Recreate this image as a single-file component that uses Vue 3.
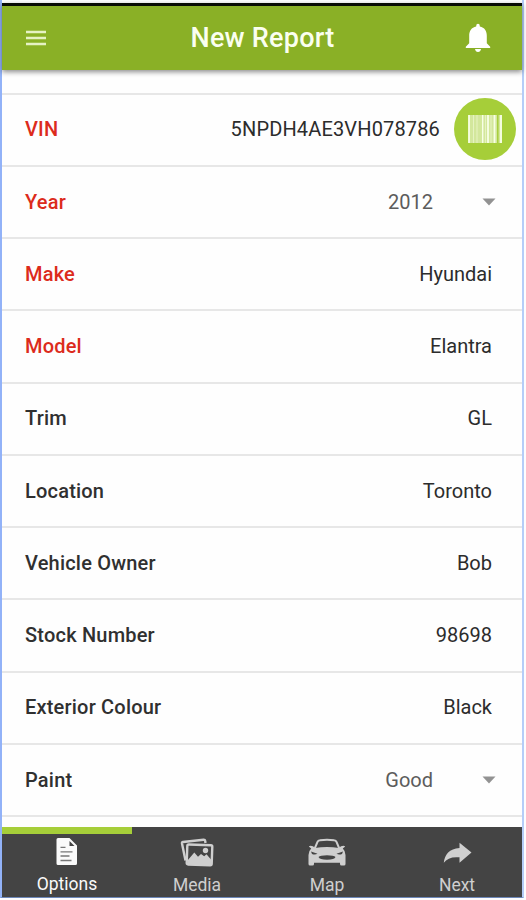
<script setup>
import {computed, ref} from "vue";

const fields = ref([
  { label: 'VIN', value: '5NPDH4AE3VH078786', required: true, type: 'scan' },
  { label: 'Year', value: '2012', required: true, type: 'select' },
  { label: 'Make', value: 'Hyundai', required: true },
  { label: 'Model', value: 'Elantra', required: true },
  { label: 'Trim', value: 'GL' },
  { label: 'Location', value: 'Toronto' },
  { label: 'Vehicle Owner', value: 'Bob' },
  { label: 'Stock Number', value: '98698' },
  { label: 'Exterior Colour', value: 'Black' },
  { label: 'Paint', value: 'Good', type: 'select' },
]);

const tabs = ['Options', 'Media', 'Map', 'Next'];
const activeTab = ref('Options');

const indicatorStyle = computed(() => ({
  width: 100 / tabs.length + '%',
  marginLeft: tabs.indexOf(activeTab.value) * 100 / tabs.length + '%',
}));
</script>

<template>
  <div class="report">
    <header class="report__header">
      <button class="report__header-button" aria-label="Menu">
        <svg width="22" height="16" viewBox="0 0 22 16">
          <path d="M1 2h20M1 8h20M1 14h20" stroke="#e6f2c4" stroke-width="2.4" />
        </svg>
      </button>
      <h1 class="report__title">New Report</h1>
      <button class="report__header-button" aria-label="Notifications">
        <svg width="26" height="30" viewBox="0 0 26 30" fill="#ffffff">
          <path d="M11.2 2.9Q11.2.8 13 .8t1.8 2.1v.7C19.600 4.500 21.800 8.200 21.800 12.800V20.200L25.200 23.800V25H.8V23.800L4.200 20.200V12.800C4.200 8.200 6.400 4.500 11.200 3.600z" />
          <path d="M10 26h6q-.5 3-3 3t-3-3z" />
        </svg>
      </button>
    </header>

    <main class="report__form">
      <div v-for="field in fields" :key="field.label" class="field" :class="field.type && 'field--' + field.type">
        <span class="field__label" :class="{ 'field__label--required': field.required }">{{field.label}}</span>
        <span class="field__value">{{field.value}}</span>
        <button v-if="field.type === 'scan'" class="field__scan" aria-label="Scan barcode">
          <svg width="34" height="28" viewBox="0 0 34 28">
            <path d="M1 0h12.500v28H1zM14 0h20v28H14z" fill="#ffffff" opacity=".5" />
            <path d="M1 0v28M14.500 0v28M20 0v28M26.500 0v28M33 0v28" stroke="#f8ffe6" stroke-width="1.800" />
            <path d="M5.500 0v28M9 0v28M17.500 0v28M23 0v28" stroke="#f8ffe6" stroke-width=".5" />
            <path d="M29.800 0v28" stroke="#a6ce39" stroke-width="1.500" />
          </svg>
        </button>
        <svg v-if="field.type === 'select'" class="field__arrow" width="14" height="8" viewBox="0 0 14 8">
          <path d="M.5.500h13L7 7.500z" fill="#929292" />
        </svg>
      </div>
    </main>

    <nav class="tabs">
      <div class="tabs__indicator" :style="indicatorStyle"></div>
      <div class="tabs__list">
        <button v-for="tab in tabs" :key="tab" class="tabs__item" :class="{ 'tabs__item--active': tab === activeTab }">
          <svg v-if="tab === 'Options'" class="tabs__icon" width="38" height="30" viewBox="0 0 38 30">
            <path d="M10 1h11.500L29 8.500V26.500a1.500 1.500 0 0 1-1.500 1.500H10a1.500 1.500 0 0 1-1.500-1.500V2.500A1.500 1.500 0 0 1 10 1z" fill="currentColor" />
            <path d="M21.500 4v5h5z" fill="#444444" />
            <path d="M12.500 10.300h5M12.500 14.800h12M12.500 19h9M12.500 23.500h11" stroke="#777777" stroke-width="1.300" />
          </svg>
          <svg v-else-if="tab === 'Media'" class="tabs__icon" width="38" height="30" viewBox="0 0 38 30">
            <path d="M7.500 22.500 4 5.500Q3.800 4.200 5 4L25.500 1.800Q27 1.700 27.200 3L27.500 5" fill="none" stroke="currentColor" stroke-width="2.400" />
            <rect x="9" y="6.800" width="25" height="20" rx="1.500" fill="#444444" stroke="currentColor" stroke-width="2.400" transform="rotate(2 21 17)" />
            <path d="M9.500 26.500V22.500l6.800-8 3.700 4.200 3-2.700 3.200 2.200 2.300-2 4.500 5.300v6z" fill="currentColor" />
            <circle cx="27.500" cy="12.500" r="2.700" fill="currentColor" />
          </svg>
          <svg v-else-if="tab === 'Map'" class="tabs__icon" width="38" height="30" viewBox="0 0 38 30">
            <path d="M6.500 11 9.500 4Q10 2.500 12 2.300Q19 1.300 26 2.300Q28 2.500 28.500 4L31.500 11" fill="none" stroke="currentColor" stroke-width="2" />
            <path d="M.8 8.500Q2 7 5 8.200L7 10Q19 8.200 31 10L33 8.200Q36 7 37.200 8.500L34.800 10.500Q37.500 13 37.500 17V26q0 1.500-1.500 1.500h-2.500q-1.500 0-1.500-1.500v-1.200H6V26q0 1.500-1.500 1.500H2Q.5 27.500.5 26V17Q.5 13 3.200 10.500z" fill="currentColor" />
            <path d="M3 13.500 9.500 15.800Q7 17.300 4 16zM35 13.500 28.500 15.800Q31 17.300 34 16zM10.500 19Q12 17.300 19 17.300T27.500 19Q26.500 21.800 19 21.800T10.500 19z" fill="#444444" />
          </svg>
          <svg v-else class="tabs__icon" width="38" height="30" viewBox="0 0 38 30">
            <path d="M21.500 4.800 33.500 14.600 21.500 24.800V19.300C14 18.500 8.800 20.500 5.800 24.800C6.500 16.500 11.500 10.500 21.500 9.900z" fill="currentColor" />
          </svg>
          <span class="tabs__label">{{tab}}</span>
        </button>
      </div>
    </nav>
  </div>
</template>

<style>
body {
  background-color: #fdfdff;
}
</style>

<style scoped>
.report {
  --green: #8ab026;
  --lime: #a6ce39;
  --frame: #92b2f8;
  box-sizing: border-box;
  width: 524px;
  height: 898px;
  padding-top: 3px;
  display: flex;
  flex-direction: column;
  border-left: 2px solid var(--frame);
  border-right: 2px solid #b5cdf8;
  border-bottom: 1px solid #6c87b8;
  background-color: #fefefe;
  font-family: Roboto, "Liberation Sans", sans-serif;
}

button {
  border: 0;
  padding: 0;
  background: none;
  font-family: inherit;
}

.report__header {
  box-sizing: border-box;
  height: 67px;
  flex-shrink: 0;
  display: flex;
  align-items: center;
  justify-content: space-between;
  padding: 0 31px 0 23px;
  border-top: 3px solid #080c04;
  background-color: var(--green);
  box-shadow: 0 2px 5px rgba(0, 0, 0, 0.45);
}

.report__header-button {
  display: flex;
}

.report__title {
  flex: 1;
  margin: 0;
  padding-left: 13px;
  text-align: center;
  font-size: 27px;
  font-weight: 500;
  letter-spacing: 0.25px;
  color: #fafff0;
}

.report__form {
  flex: 1;
  min-height: 0;
  padding-top: 22.6px;
}

.field {
  box-sizing: border-box;
  height: 72.25px;
  display: flex;
  align-items: center;
  padding: 0 30px 0.6px 23px;
  border-top: 2px solid #e7e7e7;
  font-size: 20px;
  color: #2c2c2c;
}

.field:last-child {
  height: 74px;
  border-bottom: 2px solid #e7e7e7;
}

.field--scan {
  padding-right: 6px;
}

.field--select {
  padding-right: 26px;
}

.field__label {
  flex: 1;
  font-weight: 500;
  letter-spacing: 0.2px;
  color: #303030;
}

.field__label--required {
  color: #dc2b1c;
}

.field--scan .field__value {
  letter-spacing: 0.15px;
}

.field--select .field__value {
  color: #5c5c5c;
}

.field__arrow {
  margin-left: 49px;
}

.field__scan {
  width: 62px;
  height: 62px;
  margin-left: 14px;
  display: flex;
  align-items: center;
  justify-content: center;
  border-radius: 50%;
  background-color: var(--lime);
}

.tabs {
  height: 70px;
  flex-shrink: 0;
  background-color: #444444;
}

.tabs__indicator {
  height: 7px;
  background-color: var(--lime);
}

.tabs__list {
  display: flex;
}

.tabs__item {
  flex: 1;
  display: flex;
  flex-direction: column;
  align-items: center;
  padding-top: 4px;
  color: #cfcfcf;
}

.tabs__item--active {
  padding-top: 3px;
  color: #fafafa;
}

.tabs__label {
  margin-top: 6px;
  font-size: 17.5px;
  line-height: 22px;
}
</style>
